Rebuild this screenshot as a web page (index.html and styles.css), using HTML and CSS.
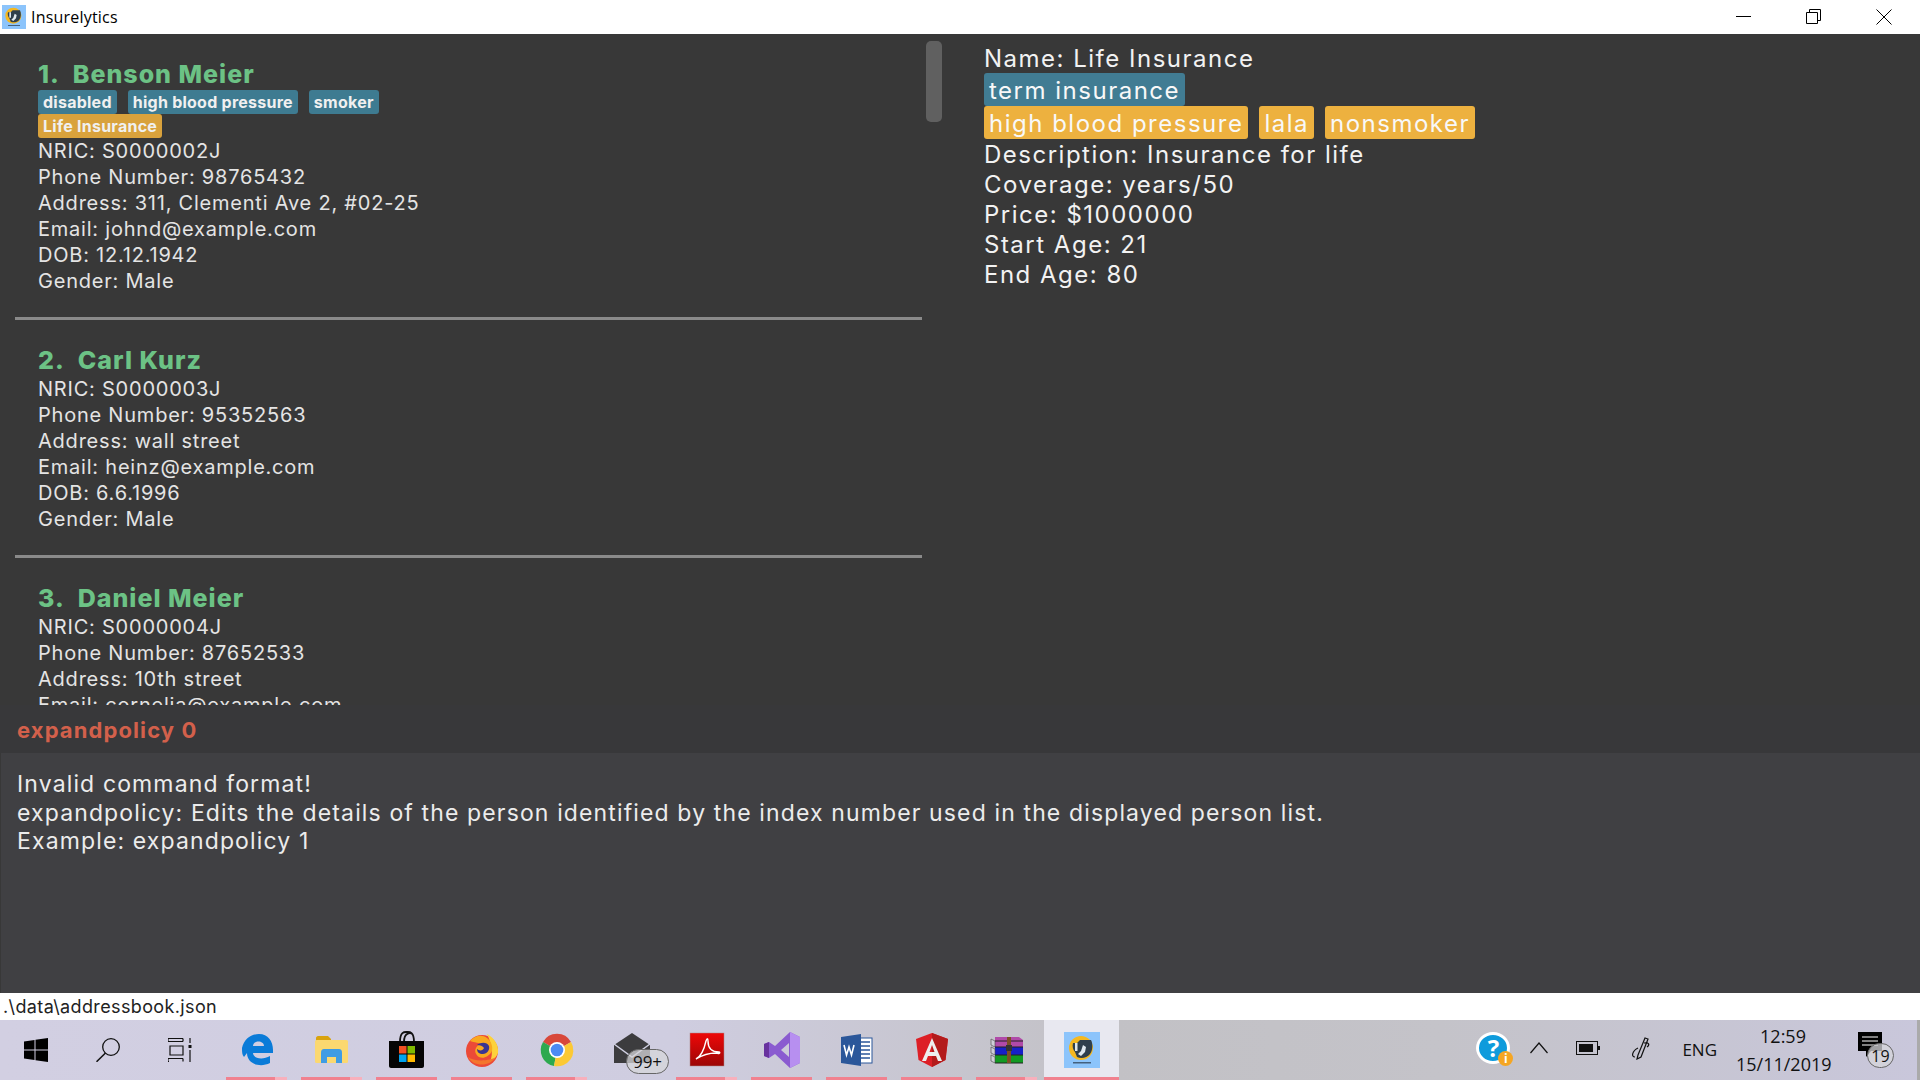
FILE: index.html
```html
<!DOCTYPE html>
<html lang="en">
<head>
    <meta charset="UTF-8">
    <title>Insurelytics</title>
    <link rel="stylesheet" href="styles.css">
</head>
<body>
    <div class="title-bar">
        <svg class="app-icon" viewBox="0 0 36 36">
            <rect width="36" height="36" fill="#8cc4fb"/>
            <circle cx="17" cy="16" r="12" fill="#f5b81f"/>
            <path d="M9 11h4l3-3h11c2 4 2 10-1 14-3 4-9 5-13 3l-2-5c-2-2-3-6-2-9z" fill="#2f3f4c"/>
            <path d="M11 11h2.500v8H11zM19 13l3 2-1 5-4 4-3-2 3-3z" fill="#dfe8ee"/>
            <rect x="9" y="30" width="18" height="1.500" fill="#44617e"/>
        </svg>
        <span class="app-name">Insurelytics</span>
        <div class="window-buttons">
            <svg class="window-icon" viewBox="0 0 16 16"><path d="M0 7.500h15" stroke="#000" fill="none"/></svg>
            <svg class="window-icon" viewBox="0 0 16 16"><path d="M.5 3.500h11v11H.5zM3.500 3.500V.5h11v11h-3" stroke="#000" fill="none"/></svg>
            <svg class="window-icon" viewBox="0 0 16 16"><path d="M.5.5l15 15M15.500.5l-15 15" stroke="#000" fill="none"/></svg>
        </div>
    </div>

    <div class="main-area">
        <div class="person-list">
            <div class="person-card">
                <div class="person-name">1.&nbsp; Benson Meier</div>
                <div class="tag-row">
                    <span class="tag tag-blue">disabled</span>
                    <span class="tag tag-blue">high blood pressure</span>
                    <span class="tag tag-blue">smoker</span>
                </div>
                <div class="tag-row">
                    <span class="tag tag-orange">Life Insurance</span>
                </div>
                <div class="person-line">NRIC: S0000002J</div>
                <div class="person-line">Phone Number: 98765432</div>
                <div class="person-line">Address: 311, Clementi Ave 2, #02-25</div>
                <div class="person-line">Email: johnd@example.com</div>
                <div class="person-line">DOB: 12.12.1942</div>
                <div class="person-line">Gender: Male</div>
            </div>
            <div class="person-card">
                <div class="person-name">2.&nbsp; Carl Kurz</div>
                <div class="person-line">NRIC: S0000003J</div>
                <div class="person-line">Phone Number: 95352563</div>
                <div class="person-line">Address: wall street</div>
                <div class="person-line">Email: heinz@example.com</div>
                <div class="person-line">DOB: 6.6.1996</div>
                <div class="person-line">Gender: Male</div>
            </div>
            <div class="person-card">
                <div class="person-name">3.&nbsp; Daniel Meier</div>
                <div class="person-line">NRIC: S0000004J</div>
                <div class="person-line">Phone Number: 87652533</div>
                <div class="person-line">Address: 10th street</div>
                <div class="person-line">Email: cornelia@example.com</div>
            </div>
        </div>
        <div class="scroll-thumb"></div>
        <div class="policy-detail">
            <div class="detail-line">Name: Life Insurance</div>
            <div class="detail-tags">
                <span class="detail-tag tag-blue-light">term insurance</span>
            </div>
            <div class="detail-tags">
                <span class="detail-tag tag-orange-light">high blood pressure</span>
                <span class="detail-tag tag-orange-light">lala</span>
                <span class="detail-tag tag-orange-light">nonsmoker</span>
            </div>
            <div class="detail-line">Description: Insurance for life</div>
            <div class="detail-line">Coverage: years/50</div>
            <div class="detail-line">Price: $1000000</div>
            <div class="detail-line">Start Age: 21</div>
            <div class="detail-line">End Age: 80</div>
        </div>
    </div>

    <div class="command-box">expandpolicy 0</div>
    <div class="result-box">
        <div>Invalid command format!</div>
        <div>expandpolicy: Edits the details of the person identified by the index number used in the displayed person list.</div>
        <div>Example: expandpolicy 1</div>
    </div>
    <div class="status-bar">.\data\addressbook.json</div>

    <div class="taskbar">
        <div class="start-cell">
            <svg class="icon-24" viewBox="0 0 24 24"><path d="M0 3.500l10.500-1.500v9.500H0zM11.500 1.800L24 0v11.500H11.500zM0 12.500h10.500V22L0 20.500zM11.500 12.500H24V24l-12.500-1.800z" fill="#000"/></svg>
        </div>
        <div class="start-cell">
            <svg class="icon-24" viewBox="0 0 24 24"><circle cx="15" cy="9" r="8.300" fill="none" stroke="#111" stroke-width="1.300"/><path d="M9.500 15L.5 23.800" stroke="#111" stroke-width="1.500"/></svg>
        </div>
        <div class="start-cell">
            <svg class="icon-24" viewBox="0 0 24 24" fill="none" stroke="#111" stroke-width="1.200"><path d="M0 .5h15M0 3.500h15M2 8h13v9H2zM0 20.500h15M0 23.500h1M15 20.500v3M0 20.500v3M0 .5v3M15 .5v3M22 0v5M22 12v12"/><rect x="20.500" y="7" width="3" height="3" fill="#111" stroke="none"/></svg>
        </div>
        <div class="app-spacer"></div>

        <div class="app-cell">
            <svg class="icon-34" viewBox="0 0 34 34"><path d="M2 15C4 6 11 1 19 1c9 0 14 7 14 16v3H13c.5 6 10 7 17 3v7c-10 5-23 1-23-10-1 1-2 3-3 4-2-2-2-5-2-9zM13 13h11c0-6-11-6-11 0z" fill="#0a7bd8"/></svg>
            <span class="run-line run-split"></span>
        </div>
        <div class="app-cell">
            <svg class="icon-34" viewBox="0 0 34 34"><path d="M1 5c0-1 1-2 2-2h10l3 3v3H1z" fill="#d9a30e"/><rect y="7" width="33" height="23" rx="1.500" fill="#fbd870"/><path d="M6 30V20c0-3 1-4 3-4h15c2 0 3 1 3 4v10h-6v-6h-9v6z" fill="#3f9ce4"/></svg>
            <span class="run-line run-split"></span>
        </div>
        <div class="app-cell">
            <svg class="icon-36" viewBox="0 0 36 36"><path d="M11 10C11-1 16 0 18 0s7-1 7 10M15 10C15 0 22 0 24 3" fill="none" stroke="#111" stroke-width="1.800"/><path d="M0 9h35v25c0 1-1 2-2 2H2c-1 0-2-1-2-2z" fill="#050505"/><rect x="10" y="14" width="7.500" height="7.500" fill="#f25022"/><rect x="18.500" y="14" width="7.500" height="7.500" fill="#7fba00"/><rect x="10" y="22.500" width="7.500" height="7.500" fill="#00a4ef"/><rect x="18.500" y="22.500" width="7.500" height="7.500" fill="#ffb900"/></svg>
            <span class="run-line"></span>
        </div>
        <div class="app-cell">
            <svg class="icon-34" viewBox="0 0 34 34"><circle cx="17" cy="18" r="16" fill="#ec4a37"/><path d="M22 1c8 4 12 12 11 19-2 5-5 7-8 8 4-7 1-19-3-27z" fill="#fdd23a"/><path d="M5 8c4-5 12-7 17-3 4 3 6 8 5 13-3 6-9 8-13 6-3-2-5-6-3-9 1-3 4-4 6-3-2-3-8-2-12-4z" fill="#f9a81f"/><path d="M12 12c4-3 10-3 12 1 1 4-2 8-6 8-4 0-6-2-6-5 2 2 6 2 7-1-1-2-4-3-7-3z" fill="#3a3591"/><path d="M3 24c5 10 22 10 28 0-6 4-22 5-28 0z" fill="#f4762d"/></svg>
            <span class="run-line"></span>
        </div>
        <div class="app-cell">
            <svg class="icon-34" viewBox="0 0 34 34"><path d="M17 17L3 9a16 16 0 0 1 28 0z" fill="#d8483a"/><path d="M17 17L3 9a16 16 0 0 0 11 24z" fill="#2da94f"/><path d="M17 17L31 9a16 16 0 0 1-17 24z" fill="#fcc934"/><circle cx="17" cy="17" r="8" fill="#fff"/><circle cx="17" cy="17" r="6.300" fill="#4c8bf5"/></svg>
            <span class="run-line run-split"></span>
        </div>
        <div class="app-cell">
            <svg class="icon-36 mail-icon" viewBox="0 0 36 30"><path d="M0 12L18 0l18 12v18H0z" fill="#3c3c3e"/><path d="M0 11l18 13 18-13" fill="none" stroke="#cfcfe0" stroke-width="1.500"/></svg>
            <span class="count-badge mail-badge">99+</span>
        </div>
        <div class="app-cell">
            <svg class="icon-34" viewBox="0 0 34 34">
                <defs>
                    <linearGradient id="pdf-red" x1="0" y1="0" x2="0" y2="1">
                        <stop offset="0" stop-color="#ee0808"/>
                        <stop offset="1" stop-color="#9c0606"/>
                    </linearGradient>
                </defs>
                <rect width="34" height="33" fill="url(#pdf-red)" stroke="#a88" stroke-width=".5"/>
                <path d="M6 26c4-2 8-9 10-18 1-3 2-3 2 0 0 7 3 11 11 11 2 1 0 2-3 1-7 0-12 1-20 6z" fill="none" stroke="#fff" stroke-width="1.400"/>
            </svg>
            <span class="run-line run-split"></span>
        </div>
        <div class="app-cell">
            <svg class="icon-36" viewBox="0 0 36 36"><path d="M26 0l10 5v26l-10 5-15-14-6 4-5-2V12l5-2 6 4zM25 11l-8 7 8 7z" fill="#8a5bd0"/><path d="M0 12l5-2v16l-5-2z" fill="#68329e"/><path d="M26 0l10 5v26l-10 5z" fill="#b78ff0"/></svg>
            <span class="run-line"></span>
        </div>
        <div class="app-cell">
            <svg class="icon-32" viewBox="0 0 32 32"><rect x="15" y="4" width="16" height="25" fill="#fff" stroke="#2b579a"/><path d="M19 8h10M19 12h10M19 16h10M19 20h10M19 24h10" stroke="#2b579a" stroke-width="1.500"/><path d="M0 3l20-3v32L0 29z" fill="#2b579a"/><path d="M3 11l2.500 10L8 13l2.500 8L13 11" fill="none" stroke="#fff" stroke-width="1.600"/></svg>
            <span class="run-line"></span>
        </div>
        <div class="app-cell">
            <svg class="icon-34" viewBox="0 0 34 34"><path d="M17 0l16 6-2.500 21L17 34 3.500 27 1 6z" fill="#dd1f26"/><path d="M17 0l16 6-2.500 21L17 34z" fill="#b31b1b"/><path d="M17 5L7 28h4l2-5h8l2 5h4zM14.500 19L17 12l2.500 7z" fill="#eee"/></svg>
            <span class="run-line"></span>
        </div>
        <div class="app-cell">
            <svg class="icon-32" viewBox="0 0 32 32"><path d="M4 3h24l4 3v7H4z" fill="#b04aa8"/><path d="M4 13h28v8H4z" fill="#1620c8"/><path d="M4 21h28v8H4z" fill="#129a22"/><path d="M0 5l4 2v6l-4-2zM0 13l4 2v6l-4-2zM0 21l4 2v6l-4-2z" fill="#cfcfd8" stroke="#444" stroke-width=".6"/><path d="M4 7h28M4 13h28M4 21h28M4 29h28" stroke="#222"/><path d="M16 3h4v26h-4z" fill="#7c4f24"/><rect x="15" y="11" width="6" height="6" fill="#333"/></svg>
            <span class="run-line run-split"></span>
        </div>
        <div class="app-cell app-cell-active">
            <svg class="icon-36" viewBox="0 0 36 36"><rect width="36" height="36" fill="#8cc4fb"/><circle cx="17" cy="16" r="12" fill="#f5b81f"/><path d="M9 11h4l3-3h11c2 4 2 10-1 14-3 4-9 5-13 3l-2-5c-2-2-3-6-2-9z" fill="#2f3f4c"/><path d="M11 11h2.500v8H11zM19 13l3 2-1 5-4 4-3-2 3-3z" fill="#dfe8ee"/><rect x="9" y="30" width="18" height="1.500" fill="#44617e"/></svg>
            <span class="run-line"></span>
        </div>

        <div class="tray">
            <div class="help-icon">
                <span class="help-mark">?</span>
                <span class="help-info">i</span>
            </div>
            <svg class="tray-caret" viewBox="0 0 18 12"><path d="M.5 11L9 1l8.500 10" fill="none" stroke="#111" stroke-width="1.200"/></svg>
            <svg class="tray-battery" viewBox="0 0 24 14"><rect x=".5" y=".5" width="21" height="13" fill="none" stroke="#111"/><rect x="3" y="3" width="14" height="8" fill="#111"/><rect x="22" y="5" width="2" height="4" fill="#111"/></svg>
            <svg class="tray-pen" viewBox="0 0 20 24"><path d="M7 19L14 2l3 1-7 18-4 2zM13 7c5-1 6 2 3 4M7 12c-6 3-7 9-3 9" fill="none" stroke="#111" stroke-width="1.200"/></svg>
            <span class="tray-lang">ENG</span>
            <div class="tray-clock">
                <div>12:59</div>
                <div>15/11/2019</div>
            </div>
            <div class="tray-notify">
                <svg class="notify-icon" viewBox="0 0 24 26"><path d="M0 0h24v19H13l-5 6v-6H0z" fill="#000"/><path d="M4 5h16M4 9h16M4 13h16" stroke="#fff"/></svg>
                <span class="count-badge notify-badge">19</span>
            </div>
        </div>
    </div>
</body>
</html>
```

FILE: styles.css
```css
* {
    box-sizing: border-box;
    margin: 0;
    padding: 0;
}
html, body {
    height: 100%;
    overflow: hidden;
}
body {
    display: flex;
    flex-direction: column;
    height: 1080px;
    background: #383838;
    font-family: 'Inter', 'Open Sans', sans-serif;
    color: #e6e6e6;
}

/* window title */
.title-bar {
    display: flex;
    align-items: center;
    height: 34px;
    background: #fff;
    color: #000;
    padding-left: 2px;
}
.app-icon {
    width: 24px;
    height: 24px;
}
.app-name {
    margin-left: 5px;
    font-family: 'Open Sans', sans-serif;
    font-size: 16px;
    letter-spacing: .2px;
}
.window-buttons {
    display: flex;
    margin-left: auto;
    gap: 54px;
    padding-right: 28px;
}
.window-icon {
    width: 16px;
    height: 16px;
}

/* person list and policy panel */
.main-area {
    display: flex;
    height: 671px;
    overflow: hidden;
    background: #383838;
}
.person-list {
    width: 926px;
    flex-shrink: 0;
    overflow: hidden;
    padding-left: 15px;
}
.person-card {
    width: 907px;
    padding: 24px 0 23px 23px;
    border-bottom: 3px solid #8a8a8a;
}
.person-name {
    height: 32px;
    line-height: 32px;
    font-size: 25px;
    font-weight: 800;
    letter-spacing: 1px;
    color: #6cc285;
}
.tag-row {
    display: flex;
    gap: 11px;
    height: 24px;
}
.tag {
    padding: 0 5px;
    height: 24px;
    line-height: 25px;
    border-radius: 3px;
    font-size: 16px;
    font-weight: 700;
    letter-spacing: .25px;
    color: #f0f0f0;
}
.tag-blue {
    background: #3e7b91;
}
.tag-orange {
    background: #d9a23c;
}
.person-line {
    height: 26px;
    line-height: 26px;
    font-size: 20px;
    letter-spacing: .78px;
    color: #e4e4e4;
    white-space: nowrap;
}
.scroll-thumb {
    width: 16px;
    height: 81px;
    margin-top: 7px;
    background: #606060;
    border-radius: 5px;
    flex-shrink: 0;
}
.policy-detail {
    margin-left: 42px;
    padding-top: 10px;
    color: #f2f2f2;
}
.detail-line {
    height: 30px;
    line-height: 30px;
    font-size: 24px;
    letter-spacing: 1.500px;
    white-space: nowrap;
}
.detail-tags {
    display: flex;
    gap: 11px;
    height: 33px;
}
.detail-tags:nth-child(2) {
    margin-top: -1px;
}
.detail-line:nth-child(4) {
    margin-top: 1px;
}
.detail-tag {
    height: 33px;
    line-height: 36px;
    padding: 0 5px;
    border-radius: 3px;
    font-size: 24px;
    letter-spacing: 1.500px;
    color: #f8f8f8;
}
.tag-blue-light {
    background: #417c93;
}
.tag-orange-light {
    background: #edb13f;
}

/* command and result */
.command-box {
    height: 48px;
    padding-left: 17px;
    line-height: 50px;
    background: #38383a;
    font-size: 22px;
    font-weight: 700;
    letter-spacing: 1.100px;
    color: #d3604b;
}
.result-box {
    height: 240px;
    padding: 17px 0 0 16px;
    margin-left: 1px;
    background: #404043;
    font-size: 23px;
    line-height: 28.500px;
    letter-spacing: 1.130px;
    color: #ececec;
    white-space: nowrap;
}
.status-bar {
    height: 27px;
    padding-left: 3px;
    line-height: 27px;
    background: #fff;
    color: #222;
    font-size: 18px;
    letter-spacing: .37px;
}

/* windows taskbar */
.taskbar {
    display: flex;
    align-items: center;
    height: 60px;
    background: linear-gradient(90deg, #d2cfe2 0%, #cfcde0 35%, #c2c1c5 58%, #c4c3c9 75%, #c9c7db 100%);
    color: #111;
}
.start-cell {
    display: flex;
    align-items: center;
    justify-content: center;
    width: 72px;
    height: 60px;
}
.app-spacer {
    width: 3px;
}
.app-cell {
    position: relative;
    display: flex;
    align-items: center;
    justify-content: center;
    width: 75px;
    height: 60px;
}
.app-cell-active {
    background: #e8e8f0;
}
.icon-24 {
    width: 24px;
    height: 24px;
}
.icon-32 {
    width: 32px;
    height: 32px;
    overflow: visible;
}
.icon-34 {
    width: 34px;
    height: 34px;
    overflow: visible;
}
.icon-36 {
    width: 36px;
    height: 36px;
    overflow: visible;
}
.mail-icon {
    height: 30px;
    margin-top: -4px;
}
.run-line {
    position: absolute;
    left: 7px;
    right: 7px;
    bottom: 0;
    height: 3px;
    background: #f1818f;
}
.app-cell-active .run-line {
    left: 0;
    right: 0;
}
.run-split {
    background: linear-gradient(90deg, #f1818f 80%, #f8b0bc 80%);
}
.count-badge {
    position: absolute;
    display: flex;
    align-items: center;
    justify-content: center;
    background: rgba(214, 214, 218, .75);
    border: 1px solid #666;
    border-radius: 14px;
    font-family: 'Open Sans', sans-serif;
    color: #111;
}
.mail-badge {
    left: 32px;
    top: 29px;
    width: 43px;
    height: 25px;
    font-size: 17px;
}
.tray {
    display: flex;
    align-items: center;
    margin-left: auto;
    height: 60px;
    padding-right: 23px;
    border-right: 3px solid #aaa;
}
.help-icon {
    position: relative;
    width: 34px;
    height: 32px;
    margin-top: -4px;
    border-radius: 50%;
    background: #0e9bdc;
    border: 3px solid #fff;
    text-align: center;
}
.help-mark {
    font-family: 'Open Sans', sans-serif;
    font-size: 24px;
    font-weight: 700;
    line-height: 26px;
    color: #fff;
}
.help-info {
    position: absolute;
    right: -6px;
    bottom: -5px;
    width: 15px;
    height: 15px;
    border-radius: 50%;
    background: #f5a623;
    color: #fff;
    font-family: 'Open Sans', sans-serif;
    font-size: 12px;
    font-weight: 700;
    line-height: 15px;
}
.tray-caret {
    width: 18px;
    height: 12px;
    margin-left: 20px;
    margin-top: -4px;
}
.tray-battery {
    width: 24px;
    height: 14px;
    margin-left: 28px;
    margin-top: -4px;
}
.tray-pen {
    width: 20px;
    height: 24px;
    margin-left: 31px;
    margin-top: -4px;
}
.tray-lang {
    margin-left: 31px;
    margin-top: -2px;
    font-family: 'Open Sans', sans-serif;
    font-size: 17px;
}
.tray-clock {
    width: 94px;
    margin-left: 19px;
    text-align: center;
    font-family: 'Open Sans', sans-serif;
    font-size: 18px;
    line-height: 28px;
}
.tray-notify {
    position: relative;
    width: 36px;
    height: 40px;
    margin-left: 28px;
}
.notify-icon {
    position: absolute;
    left: 0;
    top: 2px;
    width: 24px;
    height: 26px;
}
.notify-badge {
    left: 9px;
    top: 13px;
    width: 27px;
    height: 25px;
    font-size: 16px;
}
```
